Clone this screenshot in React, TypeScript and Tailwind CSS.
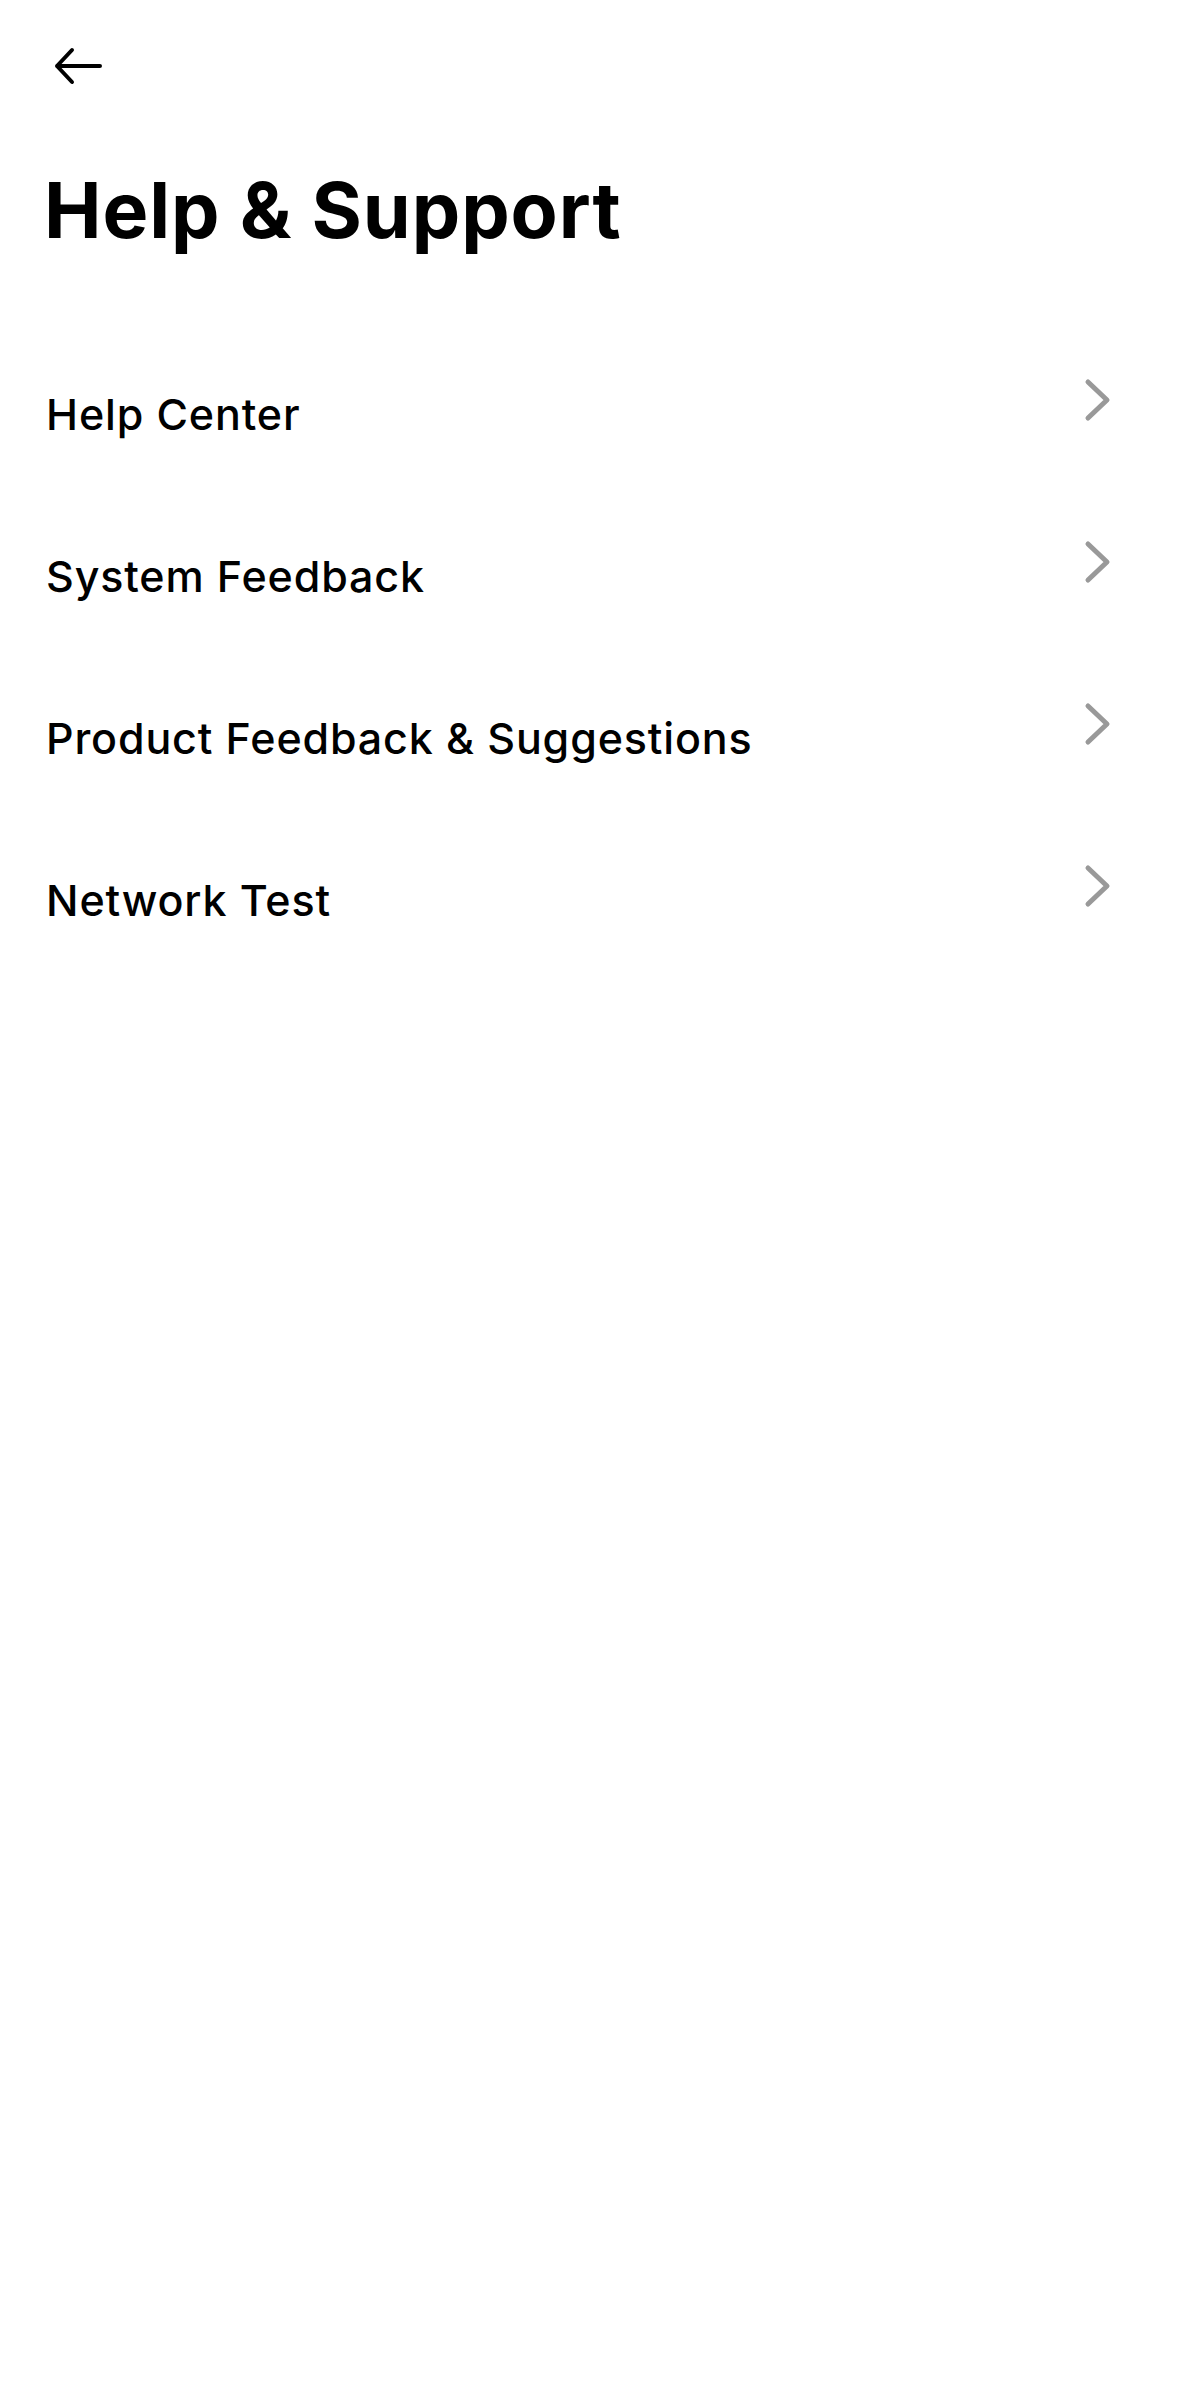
const items = ['Help Center', 'System Feedback', 'Product Feedback & Suggestions', 'Network Test']

function BackArrow() {
  return (
    <svg width="48" height="38" viewBox="0 0 48 38" fill="none">
      <path
        d="M18 3 L3 19 L18 35 M3 19 H46"
        stroke="#000"
        strokeWidth="4"
        strokeLinecap="round"
        strokeLinejoin="round"
      />
    </svg>
  )
}

function Chevron() {
  return (
    <svg width="28" height="44" viewBox="0 0 28 44" fill="none">
      <path
        d="M4 4 L23 22 L4 40"
        stroke="#999999"
        strokeWidth="5"
        strokeLinecap="round"
        strokeLinejoin="round"
      />
    </svg>
  )
}

export default function App() {
  return (
    <div className="min-h-screen bg-white font-['Inter','Liberation_Sans',sans-serif] text-black">
      <div className="pl-[54px] pt-[47px]">
        <BackArrow />
      </div>

      <h1 className="mt-[87px] pl-[44px] text-[77px] font-bold leading-none tracking-[0.012em]">
        Help &amp; Support
      </h1>

      <ul className="mt-[110px]">
        {items.map((label) => (
          <li key={label} className="flex h-[162px] items-start justify-between pl-[46px] pr-[67px]">
            <span className="mt-[34px] text-[43px] font-medium leading-none tracking-[0.02em]">
              {label}
            </span>
            <span className="mt-[19px]">
              <Chevron />
            </span>
          </li>
        ))}
      </ul>
    </div>
  )
}
